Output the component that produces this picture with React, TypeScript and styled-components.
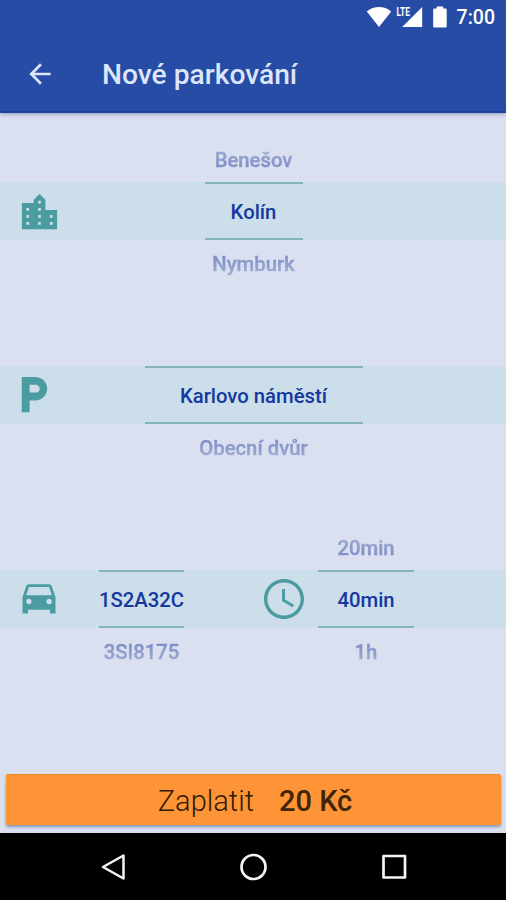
import React from 'react';
import styled, { createGlobalStyle } from 'styled-components';

const GlobalStyle = createGlobalStyle`
  * { box-sizing: border-box; }
  body { margin: 0; font-family: Roboto, "Liberation Sans", sans-serif; }
  svg { display: block; flex: none; }
`;

const Screen = styled.div`
  display: flex;
  flex-direction: column;
  width: 506px;
  height: 900px;
  overflow: hidden;
  background: #dae0ef;
`;

const Header = styled.header`
  flex: none;
  height: 113px;
  background: #264ca5;
  border-bottom: 2px solid #1c429f;
  box-shadow: 0 1px 4px rgba(30, 50, 100, 0.4);
`;

const StatusBar = styled.div`
  display: flex;
  justify-content: flex-end;
  height: 36px;
  padding-right: 11px;
  color: #fff;
`;

const Time = styled.span`
  margin-left: 8px;
  font-size: 19.5px;
  font-weight: 500;
  line-height: 36px;
`;

const Toolbar = styled.div`
  display: flex;
  align-items: center;
  height: 76px;
  padding-left: 24px;
  color: #dce5fa;
`;

const Title = styled.h1`
  margin: 2px 0 0 46px;
  font-size: 28.2px;
  font-weight: 500;
  line-height: 36px;
`;

const Content = styled.main`
  display: flex;
  flex-direction: column;
  flex: 1;
  padding-top: 23px;
`;

const Section = styled.section<{ $columns: string; $gap: number }>`
  display: grid;
  flex: none;
  grid-template-columns: ${(p) => p.$columns};
  height: 152px;
  margin-bottom: ${(p) => p.$gap}px;
  background: linear-gradient(transparent 46px, #cbdee9 46px, #cbdee9 104px, transparent 104px);
`;

const IconCell = styled.div<{ $inset?: number; $end?: boolean; $raise?: number }>`
  display: flex;
  align-items: center;
  justify-content: ${(p) => (p.$end ? 'flex-end' : 'flex-start')};
  height: 58px;
  margin-top: 46px;
  padding-left: ${(p) => p.$inset ?? 0}px;
  padding-bottom: ${(p) => p.$raise ?? 0}px;
  color: #4b9ca1;
`;

const Wheel = styled.div<{ $width: number }>`
  display: grid;
  grid-template-rows: 46px 58px 48px;
  justify-self: center;
  width: ${(p) => p.$width}px;
  text-align: center;
  white-space: nowrap;
  font-size: 20.3px;
  font-weight: 500;
`;

const Neighbour = styled.div<{ $above?: boolean }>`
  justify-self: center;
  line-height: 48px;
  color: transparent;
  -webkit-text-stroke: 0.4px transparent;
  background: ${(p) =>
    p.$above
      ? 'linear-gradient(#9ca9d4 14px, #7f8dc6 32px)'
      : 'linear-gradient(#7f8dc6 16px, #a0add6 34px)'};
  background-clip: text;
  -webkit-background-clip: text;
`;

const Selected = styled.div`
  display: flex;
  align-items: center;
  justify-content: center;
  border: solid #83b5ba;
  border-width: 2px 0;
  padding-top: 1px;
  color: #1438a0;
`;

const PayButton = styled.button`
  display: flex;
  align-items: center;
  justify-content: center;
  gap: 25px;
  height: 51px;
  margin: auto 5px 8px 6px;
  padding: 2px 0 0 3px;
  border: 0;
  border-top: 1px solid #f58a20;
  border-radius: 2px;
  background: #ff9437;
  box-shadow: 0 2px 3px rgba(40, 60, 100, 0.45);
  color: #402508;
  font: 400 29px/48px Roboto, "Liberation Sans", sans-serif;
`;

const PayLabel = styled.span`
  font-weight: 300;
  color: #2e1a05;
`;

const Price = styled.span`
  font-weight: 500;
`;

const NavBar = styled.nav`
  display: flex;
  justify-content: space-between;
  align-items: center;
  flex: none;
  height: 67px;
  padding: 0 97px 0 99px;
  background: #000;
`;

const icons = {
  city: 'M15 11.200V6l-3-3-3 3v1.600H3v13.400h18v-9.800h-6zM6.700 18.800h-1.400v-1.400h1.400zm0-3.600h-1.400v-1.400h1.400zm0-3.600h-1.400v-1.400h1.400zm6 7.200h-1.400v-1.400h1.400zm0-3.600h-1.400v-1.400h1.400zm0-3.600h-1.400v-1.400h1.400zm0-3.700h-1.400v-1.400h1.400zm6 10.900h-1.400v-1.400h1.400zm0-3.600h-1.400v-1.400h1.400z',
  parking:
    'M13 3H6v18h4v-6h3c3.31 0 6-2.69 6-6s-2.69-6-6-6zm.2 8H10V7h3.2c1.1 0 2 .9 2 2s-.9 2-2 2z',
  car: 'M18.92 6.01C18.72 5.42 18.16 5 17.5 5h-11c-.66 0-1.21.42-1.42 1.01L3 12v9h3v-2h12v2h3v-9l-2.08-5.99zM6.5 16c-.83 0-1.5-.67-1.5-1.5S5.67 13 6.5 13s1.5.67 1.5 1.5S7.33 16 6.5 16zm11 0c-.83 0-1.5-.67-1.5-1.5s.67-1.5 1.5-1.5 1.5.67 1.5 1.5-.67 1.5-1.5 1.5zM5 11l1.5-4.5h11L19 11H5z',
  clock:
    'M11.99 2C6.47 2 2 6.48 2 12s4.47 10 9.99 10C17.52 22 22 17.52 22 12S17.52 2 11.99 2zM12 20.300c-4.580 0-8.300-3.720-8.300-8.300s3.720-8.300 8.300-8.300 8.300 3.720 8.300 8.300-3.720 8.300-8.300 8.300zm.5-13.300H11v6l5.25 3.15.75-1.23-4.5-2.67z',
  back: 'M20 11H7.83l5.59-5.59L12 4l-8 8 8 8 1.41-1.41L7.83 13H20v-2z',
};

const Icon = ({ name, size }: { name: keyof typeof icons; size: number }) => (
  <svg width={size} height={size} viewBox="0 0 24 24" fill="currentColor">
    <path d={icons[name]} fillRule="evenodd" />
  </svg>
);

type PickerProps = { width: number; before?: string; value: string; after: string };

const Picker = ({ width, before, value, after }: PickerProps) => (
  <Wheel $width={width}>
    <Neighbour $above>{before}</Neighbour>
    <Selected>{value}</Selected>
    <Neighbour>{after}</Neighbour>
  </Wheel>
);

const StatusIcons = () => (
  <svg width="83" height="36" viewBox="365 0 83 36" fill="#fff">
    <path d="M378 27 365.800 11.500C373 5.600 383 5.600 390.200 11.500Z" />
    <path d="M421.200 7v20h-20Z" />
    <text x="395.500" y="15.800" fontSize="12.500" fontWeight="700" textLength="13.500" lengthAdjust="spacingAndGlyphs" stroke="#264ca5" strokeWidth="2" paintOrder="stroke">
      LTE
    </text>
    <path d="M435.700 6.500h6.500v2h2.300a1.200 1.200 0 0 1 1.200 1.200v16.600a1.200 1.200 0 0 1-1.200 1.200h-11.100a1.200 1.200 0 0 1-1.200-1.200v-16.600a1.200 1.200 0 0 1 1.200-1.200h2.300z" />
  </svg>
);

export default function App() {
  return (
    <>
      <GlobalStyle />
      <Screen>
        <Header>
          <StatusBar>
            <StatusIcons />
            <Time>7:00</Time>
          </StatusBar>
          <Toolbar>
            <Icon name="back" size={32} />
            <Title>Nové parkování</Title>
          </Toolbar>
        </Header>
        <Content>
          <Section $columns="78px 1fr 77px" $gap={32}>
            <IconCell $inset={16}>
              <Icon name="city" size={47} />
            </IconCell>
            <Picker width={98} before="Benešov" value="Kolín" after="Nymburk" />
          </Section>
          <Section $columns="78px 1fr 77px" $gap={52}>
            <IconCell $inset={10} $raise={1}>
              <Icon name="parking" size={47} />
            </IconCell>
            <Picker width={218} value="Karlovo náměstí" after="Obecní dvůr" />
          </Section>
          <Section $columns="78px 127px 103px 116px" $gap={0}>
            <IconCell $inset={17} $raise={4}>
              <Icon name="car" size={44} />
            </IconCell>
            <Picker width={85} value="1S2A32C" after="3SI8175" />
            <IconCell $end>
              <Icon name="clock" size={48} />
            </IconCell>
            <Picker width={96} before="20min" value="40min" after="1h" />
          </Section>
          <PayButton>
            <PayLabel>Zaplatit</PayLabel>
            <Price>20 Kč</Price>
          </PayButton>
        </Content>
        <NavBar>
          <svg width="28" height="30" viewBox="0 0 28 30" fill="none" stroke="#f4f4f4" strokeWidth="2.500" strokeLinejoin="round">
            <path d="M24.500 3.500v23L4 15Z" />
          </svg>
          <svg width="28" height="28" viewBox="0 0 28 28" fill="none" stroke="#f4f4f4" strokeWidth="2.700">
            <circle cx="14.500" cy="14" r="12" />
          </svg>
          <svg width="30" height="28" viewBox="0 0 30 28" fill="none" stroke="#f4f4f4" strokeWidth="2.700" strokeLinejoin="round">
            <rect x="4.500" y="3" width="21.500" height="21.500" />
          </svg>
        </NavBar>
      </Screen>
    </>
  );
}
